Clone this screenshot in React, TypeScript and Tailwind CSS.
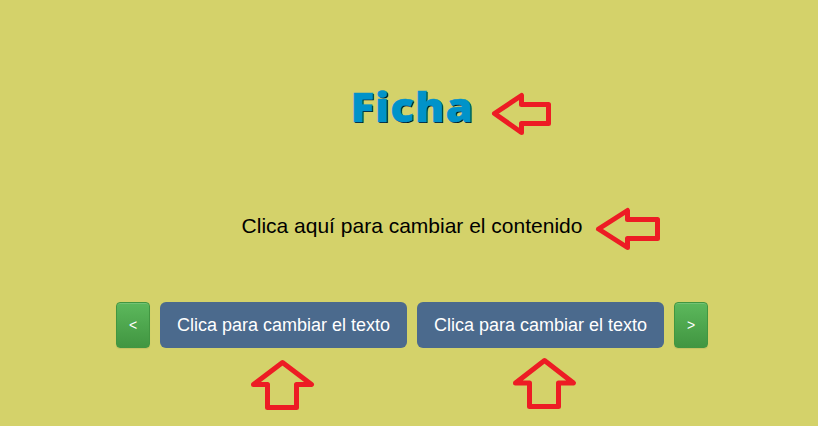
const ARROWS = [
  'M494.5 113.5 L521.5 95.5 V104.5 H548.5 V123.5 H521.5 V132.5 Z',
  'M598.5 229 L627.5 210.5 V219.5 H657.5 V238.5 H627.5 V247.5 Z',
  'M282.5 362.5 L311.5 384.5 H296.5 V407.5 H267.5 V384.5 H253.5 Z',
  'M544.5 360.5 L573.5 383 H558.5 V406.5 H529.5 V383 H515.5 Z',
];

function NavButton({ label }: { label: string }) {
  return (
    <button className="h-[46px] w-[34px] rounded-[4px] border border-[#419641] bg-linear-to-b from-[#5cb85c] to-[#419641] text-[14px] text-white shadow-[inset_0_1px_0_rgba(255,255,255,0.15),0_1px_1px_rgba(0,0,0,0.075)]">
      {label}
    </button>
  );
}

function TextButton() {
  return (
    <button className="h-[46px] w-[247px] rounded-[6px] bg-[#4b6a8d] text-[18px] whitespace-nowrap text-white">
      Clica para cambiar el texto
    </button>
  );
}

export default function App() {
  return (
    <main className="relative flex h-[426px] w-[818px] flex-col items-center overflow-hidden bg-[#d4d26a] font-['Liberation_Sans',Arial,sans-serif]">
      <div className="flex w-full flex-col items-center pl-[6px]">
        <h1 className="mt-[77px] h-[60px] scale-x-[1.1] font-['Open_Sans',sans-serif] text-[40.5px] leading-[60px] font-extrabold tracking-[0.6px] text-[#0093c9] [-webkit-text-stroke:0.5px_#0093c9] [text-shadow:1px_1px_0_#08101c]">
          Ficha
        </h1>
        <p className="mt-[74px] h-[30px] text-[21px] leading-[30px] text-black">
          Clica aquí para cambiar el contenido
        </p>
        <div className="mt-[61px] flex gap-[10px]">
          <NavButton label="<" />
          <TextButton />
          <TextButton />
          <NavButton label=">" />
        </div>
      </div>
      <svg
        className="pointer-events-none absolute inset-0"
        width="818"
        height="426"
        viewBox="0 0 818 426"
        fill="none"
        stroke="#ed1c24"
        strokeWidth="5"
        strokeLinejoin="round"
      >
        {ARROWS.map((d) => (
          <path key={d} d={d} />
        ))}
      </svg>
    </main>
  );
}
